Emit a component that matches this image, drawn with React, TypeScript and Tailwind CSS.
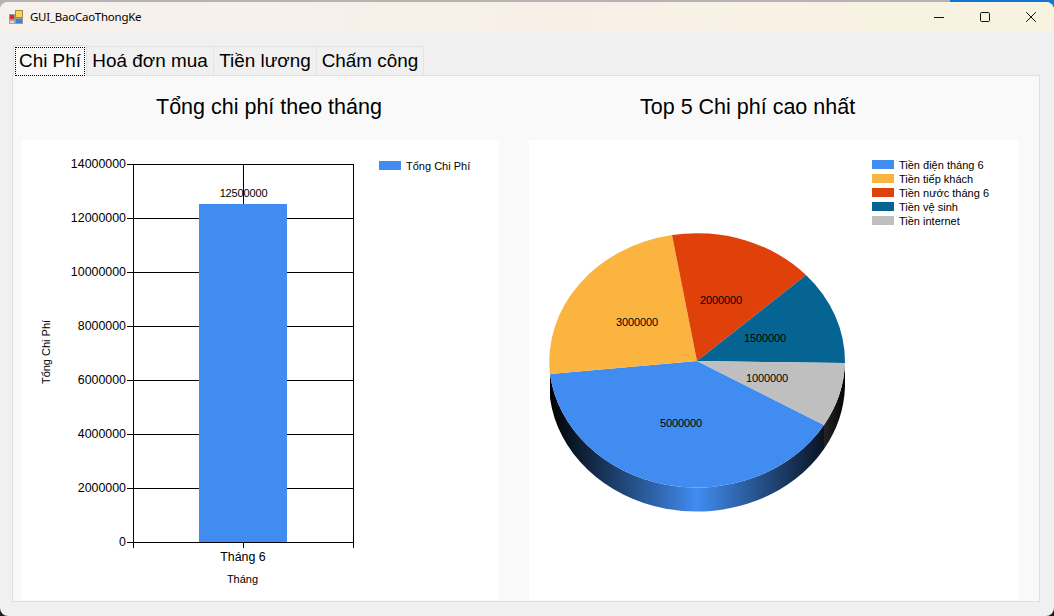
const yTicks = [
  { label: "14000000", y: 164 },
  { label: "12000000", y: 218 },
  { label: "10000000", y: 272 },
  { label: "8000000", y: 326 },
  { label: "6000000", y: 380 },
  { label: "4000000", y: 434 },
  { label: "2000000", y: 488 },
  { label: "0", y: 542 },
];

const pieLegend = [
  { label: "Tiền điện tháng 6", color: "#418CF0", y: 160 },
  { label: "Tiền tiếp khách", color: "#FCB441", y: 174 },
  { label: "Tiền nước tháng 6", color: "#E0400A", y: 188 },
  { label: "Tiền vệ sinh", color: "#056492", y: 202 },
  { label: "Tiền internet", color: "#BFBFBF", y: 216 },
];

const C = "697,361";
const RX = 148;
const RY = 128.5;
const slices = [
  { color: "#418CF0", d: `M${C} L824,425 A${RX},${RY} 0 0 1 550,374 Z` },
  { color: "#FCB441", d: `M${C} L550,374 A${RX},${RY} 0 0 1 672,235 Z` },
  { color: "#E0400A", d: `M${C} L672,235 A${RX},${RY} 0 0 1 806,275 Z` },
  { color: "#056492", d: `M${C} L806,275 A${RX},${RY} 0 0 1 845,363 Z` },
  { color: "#BFBFBF", d: `M${C} L845,363 A${RX},${RY} 0 0 1 824,425 Z` },
];

const pieLabels = [
  { t: "5000000", x: 681, y: 427 },
  { t: "3000000", x: 637, y: 326 },
  { t: "2000000", x: 721, y: 304 },
  { t: "1500000", x: 765, y: 342 },
  { t: "1000000", x: 767, y: 382 },
];

function BarChart() {
  return (
    <svg viewBox="22 140 477 460" className="block h-[460px] w-[477px] bg-white">
      <g stroke="#000" strokeWidth="1" shapeRendering="crispEdges">
        {yTicks.map((t) => (
          <line key={t.y} x1="127" x2="354" y1={t.y + 0.5} y2={t.y + 0.5} />
        ))}
        <line x1="133.5" x2="133.5" y1="164" y2="548" />
        <line x1="353.5" x2="353.5" y1="164" y2="548" />
        <line x1="243.5" x2="243.5" y1="164" y2="548" />
      </g>
      <rect x="199" y="204" width="88" height="338" fill="#418CF0" />
      <g className="fill-black text-[12.4px]">
        {yTicks.map((t) => (
          <text key={t.y} x="126" y={t.y + 4} textAnchor="end">
            {t.label}
          </text>
        ))}
        <text x="243" y="561" textAnchor="middle">Tháng 6</text>
      </g>
      <g className="fill-black text-[11px]">
        <text x="243.5" y="197" textAnchor="middle" letterSpacing="-0.15">12500000</text>
        <text x="242.5" y="583" textAnchor="middle">Tháng</text>
        <text transform="translate(50,352) rotate(-90)" textAnchor="middle">Tổng Chi Phí</text>
        <text x="406" y="170">Tổng Chi Phí</text>
      </g>
      <rect x="379" y="161" width="22" height="9" fill="#418CF0" />
    </svg>
  );
}

function PieChart() {
  return (
    <svg viewBox="529 140 489 460" className="block h-[460px] w-[489px] bg-white">
      <defs>
        <linearGradient id="side" gradientUnits="userSpaceOnUse" x1="549" x2="845" y1="0" y2="0">
          <stop offset="0" stopColor="#000000" />
          <stop offset="0.5" stopColor="#418CF0" />
          <stop offset="1" stopColor="#000000" />
        </linearGradient>
        <linearGradient id="sideGray" gradientUnits="userSpaceOnUse" x1="824" x2="845" y1="0" y2="0">
          <stop offset="0" stopColor="#242424" />
          <stop offset="1" stopColor="#050505" />
        </linearGradient>
      </defs>
      <path d={`M550,374 A${RX},${RY} 0 0 0 824,425 L824,449 A${RX},${RY} 0 0 1 550,398 Z`} fill="url(#side)" />
      <path d={`M824,425 A${RX},${RY} 0 0 0 845,363 L845,387 A${RX},${RY} 0 0 1 824,449 Z`} fill="url(#sideGray)" />
      {slices.map((s) => (
        <path key={s.color} d={s.d} fill={s.color} />
      ))}
      <g className="fill-black text-[11px]">
        {pieLabels.map((l) => (
          <text key={l.t} x={l.x} y={l.y} textAnchor="middle" letterSpacing="-0.15">
            {l.t}
          </text>
        ))}
      </g>
      {pieLegend.map((l) => (
        <g key={l.label}>
          <rect x="872" y={l.y} width="22" height="9" fill={l.color} />
          <text x="899" y={l.y + 9} className="fill-black text-[11px]">
            {l.label}
          </text>
        </g>
      ))}
    </svg>
  );
}

function AppIcon() {
  return (
    <svg width="16" height="16" viewBox="0 0 16 16" className="shrink-0">
      <rect x="7.5" y="1.5" width="7" height="7" fill="#fbd34d" stroke="#a58a4a" />
      <rect x="1.5" y="5.5" width="5" height="5" fill="#d92b20" stroke="#9a9a9a" />
      <rect x="7.5" y="9.5" width="7" height="5" fill="#3f7fd6" stroke="#9a9a9a" />
      <rect x="1.5" y="11.5" width="5" height="3" fill="#d9d9d9" stroke="#a8a8a8" />
    </svg>
  );
}

function Tab({ label, active, w }: { label: string; active?: boolean; w: string }) {
  if (active) {
    return (
      <div className="z-10 mb-[-1px] flex h-[31px] w-[74px] items-center justify-center border border-b-0 border-[#dfdfdf] bg-[#f9f9f9] p-[1px] pb-0">
        <div className="flex h-full w-full items-center justify-center border border-dotted border-black pb-[1px]">
          {label}
        </div>
      </div>
    );
  }
  return (
    <div className={`flex h-[29px] items-center justify-center border border-b-0 border-l-0 border-[#e4e4e4] bg-[#f0f0f0] pt-[1px] ${w}`}>
      {label}
    </div>
  );
}

export default function App() {
  return (
    <div className="h-[616px] w-[1054px] overflow-hidden pt-[2px] font-['Liberation_Sans',Arial,sans-serif] [background:linear-gradient(90deg,#b4b4b4_950px,#0f78d6_950px)_top/100%_50%_no-repeat,#1c1c1c]">
      <div className="flex h-[614px] flex-col overflow-hidden rounded-[8px] bg-[#f0f0f0]">
        <div className="flex h-[30px] shrink-0 items-center bg-gradient-to-r from-[#f6f1ee] via-[#f8f0e8] to-[#f8f3e0] pl-[8px]">
          <AppIcon />
          <span className="ml-[6px] font-['Noto_Sans',sans-serif] text-[11.5px] tracking-[-0.25px] text-black">GUI_BaoCaoThongKe</span>
          <div className="ml-auto flex items-center">
            <button className="flex h-[30px] w-[46px] items-center justify-center">
              <svg width="10" height="10" viewBox="0 0 10 10"><path d="M0 5.5H10" stroke="#111" /></svg>
            </button>
            <button className="flex h-[30px] w-[46px] items-center justify-center">
              <svg width="10" height="10" viewBox="0 0 10 10"><rect x="0.5" y="0.5" width="9" height="9" rx="1.2" fill="none" stroke="#111" /></svg>
            </button>
            <button className="flex h-[30px] w-[46px] items-center justify-center">
              <svg width="10" height="10" viewBox="0 0 10 10"><path d="M0.2 0.2L9.8 9.8M9.8 0.2L0.2 9.8" stroke="#111" /></svg>
            </button>
          </div>
        </div>

        <div className="flex items-end pl-[13px] pt-[13px] text-[18.9px] leading-none text-black">
          <Tab label="Chi Phí" active w="" />
          <Tab label="Hoá đơn mua" w="w-[127px]" />
          <Tab label="Tiền lương" w="w-[103px]" />
          <Tab label="Chấm công" w="w-[107px]" />
        </div>

        <div className="ml-[12px] flex h-[527px] w-[1028px] flex-col border border-[#dfdfdf] bg-[#f9f9f9]">
          <div className="flex h-[64px] shrink-0 items-center pb-[1px] text-[21.5px] text-black">
            <h2 className="ml-[143px] w-[484px] font-normal">Tổng chi phí theo tháng</h2>
            <h2 className="font-normal">Top 5 Chi phí cao nhất</h2>
          </div>
          <div className="flex gap-[30px] pl-[9px]">
            <BarChart />
            <PieChart />
          </div>
        </div>
      </div>
    </div>
  );
}
